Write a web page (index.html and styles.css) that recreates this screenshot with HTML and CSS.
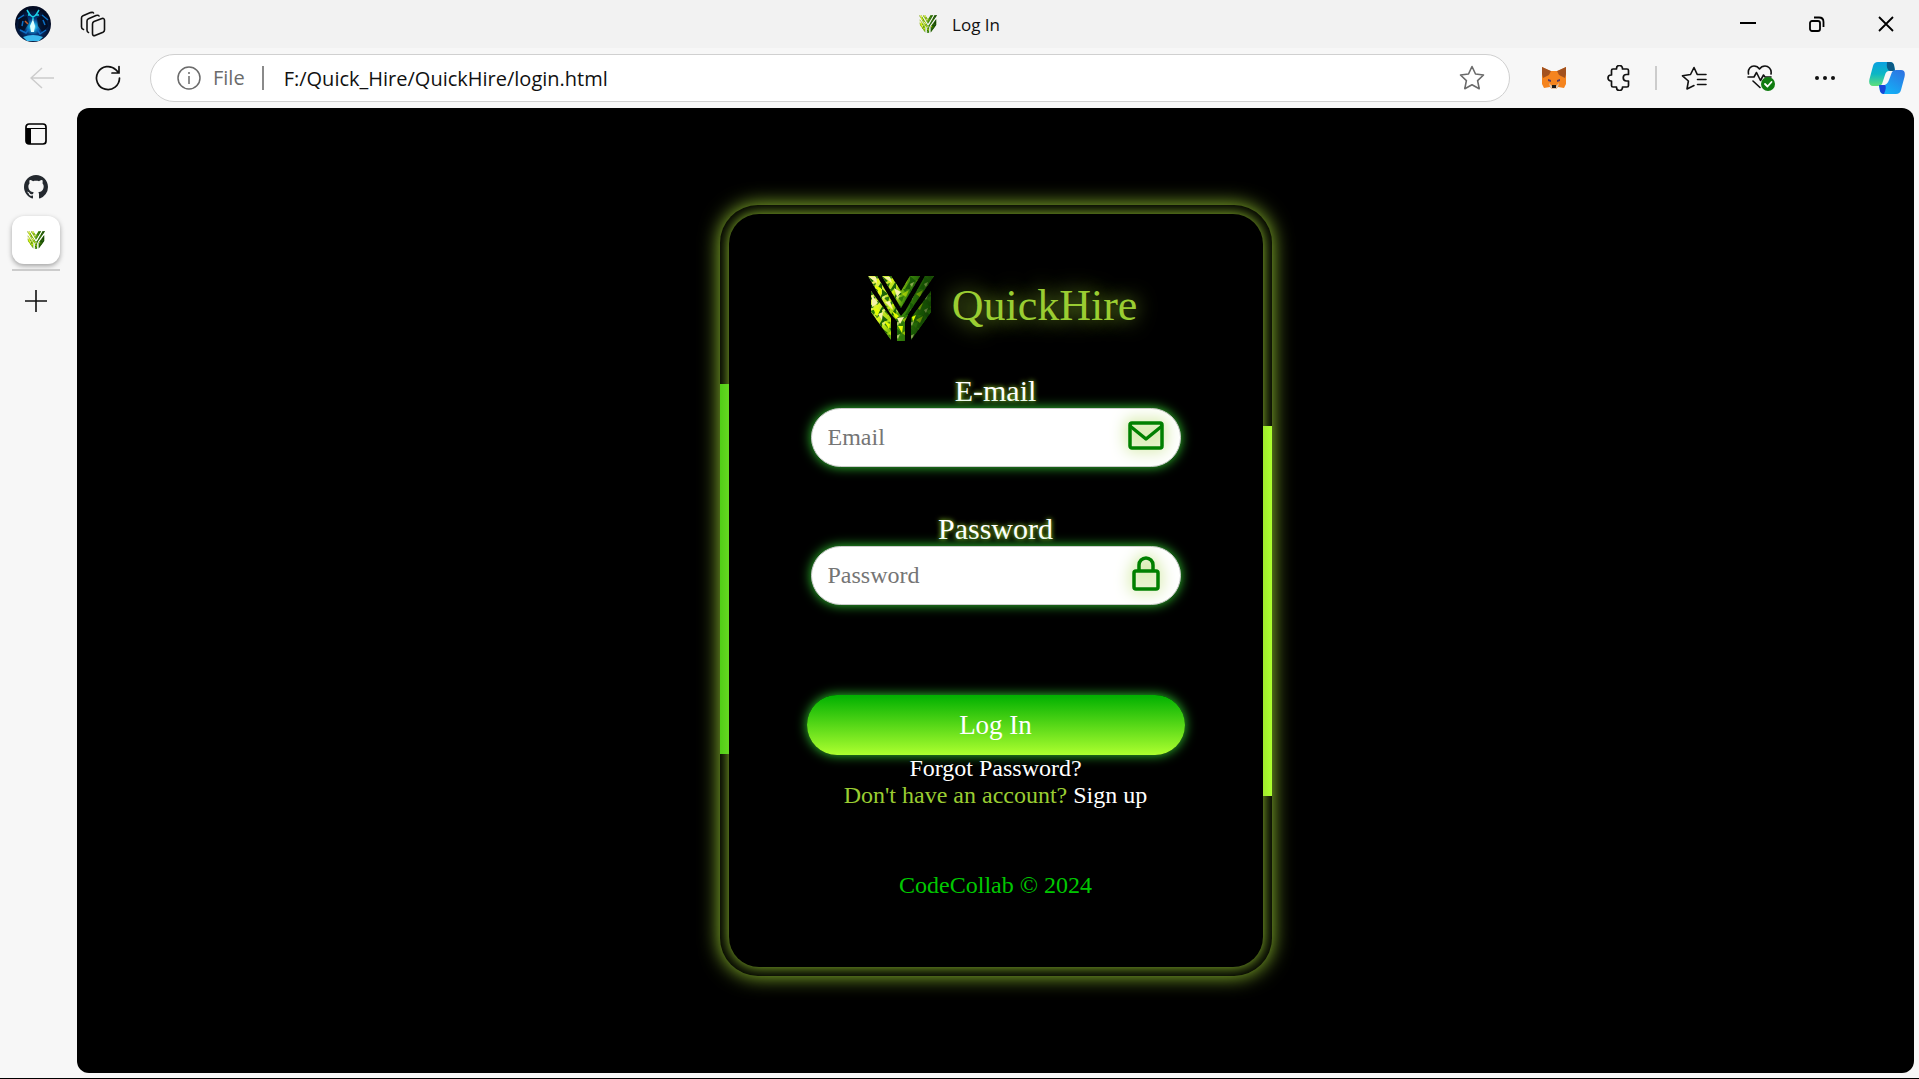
FILE: index.html
```html
<!DOCTYPE html>
<html lang="en">
<head>
<meta charset="utf-8">
<title>Log In</title>
<link rel="stylesheet" href="styles.css">
</head>
<body>
<svg class="defs" aria-hidden="true">
  <defs>
    <linearGradient id="leaf" x1="0" y1="0" x2="66" y2="20" gradientUnits="userSpaceOnUse">
      <stop offset="0" stop-color="#f4f56a"/><stop offset=".45" stop-color="#b5e014"/><stop offset=".62" stop-color="#3f8f0c"/><stop offset="1" stop-color="#174f04"/>
    </linearGradient>
    <pattern id="facets" width="14" height="13" patternUnits="userSpaceOnUse">
      <path d="M0 0L6 5L0 8zM14 5L9 13H14z" fill="#1c6405"/>
      <path d="M6 5L13 1L10 8z" fill="#e9ff00" opacity=".55"/>
      <path d="M2 9L8 7L6 13z" fill="#2d7a08"/>
      <path d="M7 0H12L9 3z" fill="#2d7a08"/>
      <path d="M0 8L4 6L2 11z" fill="#f3f0a0" opacity=".6"/>
    </pattern>
    <linearGradient id="shade" x1="0" x2="1" y1="0" y2="0">
      <stop offset=".5" stop-color="#0a3300" stop-opacity="0"/><stop offset="1" stop-color="#0a3300" stop-opacity=".6"/>
    </linearGradient>
    <path id="strands" d="M0 0H9L29 34L33 40L38 34L57 0H66L40 38V39L37 45V65H29V45L22 37zM14 0H23L33 15L42 0H52L33 32zM3 15L23 42V64L3 36zM63 15L43 42V64L63 36z"/>
    <symbol id="logo" viewBox="0 0 66 65">
      <use href="#strands" fill="url(#leaf)"/>
      <use href="#strands" fill="url(#facets)"/>
      <use href="#strands" fill="url(#shade)"/>
      <path d="M1 1H8L9 7zM16 1H22L24 7zM4 19L10 27L4 31zM17 26L22 25L25 34zM10 38L15 36L14 44zM26 12L33 16L29 21zM29 42L36 41L32 48z" fill="#f6f2a8"/>
      <path d="M6 9L13 12L13 19zM5 32L12 34L9 41zM16 45L22 48L21 53zM24 35L31 40L28 43zM30 50H35L34 57zM44 41L48 39L45 46z" fill="#e6ff00"/>
    </symbol>
  </defs>
</svg>

<div class="browser">
  <header class="titlebar">
    <div class="titlebar-start">
      <button class="icon-btn" aria-label="Profile">
        <svg width="36" height="36" viewBox="0 0 36 36">
          <defs>
            <radialGradient id="glow" cx=".5" cy=".58" r=".5"><stop offset="0" stop-color="#bff"/><stop offset=".18" stop-color="#18a8e0"/><stop offset=".45" stop-color="#063a80"/><stop offset="1" stop-color="#020a22"/></radialGradient>
          </defs>
          <circle cx="18" cy="18" r="18" fill="url(#glow)"/>
          <path d="M4 12L12 10L14 17L9 25L3 22zM22 12L30 8L33 20L28 27L23 20z" fill="#030818" opacity=".75"/>
          <path d="M3 13L9 9M27 9L33 14M5 24L11 27L14 23M31 24L25 28L22 23M8 15L7 20M28 14L30 19" stroke="#0d6fc4" stroke-width="1.500" fill="none"/>
          <path d="M12 4L15 9L18 11L21 9L24 4M18 10V14M13 9H16M20 9H24" stroke="#1ad0e8" stroke-width="1.500" fill="none"/>
          <path d="M18 13L20 20L19 26H16L15 20z" fill="#d9ffff"/>
          <path d="M8 31Q18 27 28 31L24 35H12z" fill="#39b9ee"/>
          <path d="M10 15L13 18" stroke="#c45a2a" stroke-width="1.500"/>
        </svg>
      </button>
      <button class="icon-btn" aria-label="Workspaces">
        <svg width="26" height="26" viewBox="0 0 26 26" fill="none" stroke="#111" stroke-width="1.600" stroke-linejoin="round" stroke-linecap="round">
          <path d="M14 10.500L22 7.500Q24.500 7 24.500 9.500V19Q24.500 20.500 23 21.200L15 24.600Q12.500 25 12.500 22.500V13Q12.500 11.200 14 10.500z"/>
          <path d="M8.500 21.500Q7 21 7 19V10Q7 8.500 8.500 7.800L16 4.500Q18.500 4 19 5"/>
          <path d="M3.500 18.500Q1.500 18 1.500 16V7Q1.500 5.500 3 4.800L10.500 1.600Q13 1 13.500 2"/>
        </svg>
      </button>
    </div>
    <div class="page-title">
      <svg class="favicon" width="18" height="18"><use href="#logo"/></svg>
      <span>Log In</span>
    </div>
    <div class="window-controls">
      <button class="icon-btn" aria-label="Minimize"><svg width="16" height="16"><path d="M0 7H16" stroke="#000" stroke-width="2"/></svg></button>
      <button class="icon-btn" aria-label="Restore"><svg width="16" height="16" fill="none" stroke="#000" stroke-width="1.800"><rect x="1" y="5" width="10" height="10" rx="2"/><path d="M5 1.500H10Q14.500 1.500 14.500 6V11"/></svg></button>
      <button class="icon-btn" aria-label="Close"><svg width="16" height="16"><path d="M1 1L15 15M15 1L1 15" stroke="#000" stroke-width="1.800"/></svg></button>
    </div>
  </header>

  <div class="toolbar">
    <button class="icon-btn back" aria-label="Back"><svg width="24" height="22" fill="none" stroke="#ccc" stroke-width="1.500"><path d="M24 11H1M12 1L1 11L12 21"/></svg></button>
    <button class="icon-btn reload" aria-label="Refresh"><svg width="26" height="26" fill="none" stroke="#111" stroke-width="1.700" stroke-linecap="round"><path d="M24.500 13A11.500 11.500 0 1 1 21 4.800L23.500 7.500M24 1.500V8H17"/></svg></button>
    <div class="address">
      <svg width="24" height="24" fill="none" stroke="#6b6b6b" stroke-width="1.500"><circle cx="12" cy="12" r="11"/><path d="M12 10V18M12 6V8"/></svg>
      <span class="scheme">File</span>
      <input class="url" type="text" aria-label="Address" value="F:/Quick_Hire/QuickHire/login.html">
      <button class="icon-btn" aria-label="Add to favorites"><svg width="26" height="26" viewBox="0 0 26 26" fill="none" stroke="#6b6b6b" stroke-width="1.600" stroke-linejoin="round"><path d="M13 1.500L16.500 9L24.500 10L18.600 15.600L20.200 23.700L13 19.800L5.800 23.700L7.400 15.600L1.500 10L9.500 9z"/></svg></button>
    </div>
    <div class="extensions">
      <button class="icon-btn" aria-label="MetaMask">
        <svg width="26" height="24" viewBox="0 0 26 24"><path d="M1 1L9 5H17L25 1V18L23 22L17 21L15 23H11L9 21L3 22L1 18z" fill="#f5841f"/><path d="M1 1L10 5L8 9L2 12L1 8zM25 1L16 5L18 9L24 12L25 8z" fill="#a3521f"/><path d="M8 17L11 20H15L18 17L17 21L15 23H11L9 21z" fill="#e0c4ae"/><path d="M11 19H15V22H11z" fill="#1c1c1c"/><path d="M7 13L10 14V16L7 15zM19 13L16 14V16L19 15z" fill="#5c3a5e"/></svg>
      </button>
      <button class="icon-btn" aria-label="Extensions">
        <svg width="24" height="26" viewBox="0 0 24 26" fill="none" stroke="#111" stroke-width="1.700" stroke-linejoin="round"><path d="M6 4H9.500V3.500A3 3 0 0 1 15.500 3.500V4H20Q21.500 4 21.500 5.500V9.500H19.500A3 3 0 0 0 19.500 16H21.500V20.500Q21.500 22 20 22H15.500V22.500A3 3 0 0 1 9.500 22.500V22H6Q4.500 22 4.500 20.500V16H4A3 3 0 0 1 4 10H4.500V5.500Q4.500 4 6 4z"/></svg>
      </button>
      <span class="divider"></span>
      <button class="icon-btn" aria-label="Favorites">
        <svg width="26" height="24" viewBox="0 0 26 24" fill="none" stroke="#111" stroke-width="1.600" stroke-linejoin="round" stroke-linecap="round"><path d="M13 19.500L6 23L7.400 15L1.500 9.800L9.500 8.500L13 1.500L16.200 8.300M16.500 8.500H25M16.500 13.500H25M16.500 18.500H25"/></svg>
      </button>
      <button class="icon-btn" aria-label="Browser essentials">
        <svg width="28" height="26" viewBox="0 0 28 26" fill="none" stroke="#111" stroke-width="1.600" stroke-linejoin="round" stroke-linecap="round"><path d="M1.500 9C.5 3.500 4 1 7 1Q10.500 1 12.500 4Q14.500 1 18 1C21 1 25 3.500 24 9M1 12H7L9.500 7.500L13.500 15.500L16.500 10L18 12H24M6 16L13 22.500"/><circle cx="21" cy="19" r="7" fill="#107c10" stroke="none"/><path d="M18 19L20.500 21.500L24.500 17" stroke="#fff" stroke-width="1.800"/></svg>
      </button>
      <button class="icon-btn" aria-label="Settings and more"><svg width="20" height="6"><g fill="#111"><circle cx="2" cy="3" r="2"/><circle cx="10" cy="3" r="2"/><circle cx="18" cy="3" r="2"/></g></svg></button>
      <button class="icon-btn copilot" aria-label="Copilot">
        <svg width="36" height="32" viewBox="0 0 36 32">
          <defs>
            <linearGradient id="cpA" x1="0" y1="0" x2="0" y2="1"><stop offset="0" stop-color="#0aa0e0"/><stop offset=".5" stop-color="#0cb7c4"/><stop offset="1" stop-color="#5fdf7a"/></linearGradient>
            <linearGradient id="cpB" x1="1" y1="0" x2=".3" y2="1"><stop offset="0" stop-color="#2f6fe0"/><stop offset="1" stop-color="#12b4f8"/></linearGradient>
          </defs>
          <path d="M9 0H21Q24 0 25 3L26 9H20Q17 9 16 13L13 22Q12 24 9 24H4Q-1 24 .5 17L4 4Q5 0 9 0z" fill="url(#cpA)"/>
          <path d="M18 0H21Q24 0 25 3L26 9H21Q17 8 18 0z" fill="#0b5a86"/>
          <path d="M27 32H15Q12 32 11 29L10 23H13Q18 24 20 18L23 10Q24 8 27 8H32Q37 8 35.500 15L32 28Q31 32 27 32z" fill="url(#cpB)"/>
          <path d="M10 23H16Q18 25 15 32Q12 32 11 29z" fill="#1746d8"/>
        </svg>
      </button>
    </div>
  </div>

  <div class="body-row">
    <nav class="sidebar" aria-label="Tabs">
      <button class="icon-btn tab" aria-label="Tab actions"><svg width="22" height="22"><rect x="1" y="1" width="20" height="20" rx="3" fill="none" stroke="#000" stroke-width="1.700"/><path d="M1 5H21V6H6V21H3L1 19z"/></svg></button>
      <button class="icon-btn tab" aria-label="GitHub"><svg width="24" height="24" viewBox="0 0 16 16" fill="#24292f"><path d="M8 0C3.580 0 0 3.580 0 8c0 3.540 2.290 6.530 5.470 7.590.4.070.55-.17.55-.38 0-.19-.01-.82-.01-1.490-2.010.37-2.530-.49-2.690-.94-.09-.23-.48-.94-.82-1.130-.28-.15-.68-.52-.01-.53.63-.01 1.080.58 1.230.82.72 1.210 1.870.87 2.330.66.070-.52.28-.87.51-1.070-1.780-.2-3.640-.89-3.640-3.950 0-.87.31-1.590.82-2.150-.08-.2-.36-1.020.08-2.120 0 0 .67-.21 2.200.82.64-.18 1.320-.27 2-.27s1.360.09 2 .27c1.530-1.040 2.200-.82 2.200-.82.44 1.100.16 1.920.08 2.120.51.56.82 1.270.82 2.150 0 3.070-1.870 3.750-3.650 3.950.29.25.54.73.54 1.480 0 1.070-.01 1.930-.01 2.200 0 .21.15.46.55.38A8.010 8.010 0 0 0 16 8c0-4.420-3.580-8-8-8z"/></svg></button>
      <button class="icon-btn tab tab-active" aria-label="Log In"><svg width="18" height="18"><use href="#logo"/></svg></button>
      <button class="icon-btn tab tab-new" aria-label="New tab"><svg width="22" height="22"><path d="M11 0V22M0 11H22" stroke="#111" stroke-width="1.600"/></svg></button>
    </nav>

    <main class="viewport">
      <section class="frame">
        <div class="card">
          <h1 class="brand">
            <svg width="94" height="94" viewBox="-14 -18 94 94"><use href="#logo" width="66" height="65"/></svg>
            <span>QuickHire</span>
          </h1>
          <form class="form">
            <label for="email">E-mail</label>
            <div class="field">
              <input id="email" type="email" placeholder="Email">
              <svg class="field-icon" width="36" height="36" viewBox="0 0 36 36" fill="none" stroke="#008000" stroke-width="3.500" stroke-linejoin="round"><rect x="2" y="6" width="32" height="25" rx="2"/><path d="M2 9L18 22L34 9"/></svg>
            </div>
            <label for="password">Password</label>
            <div class="field">
              <input id="password" type="password" placeholder="Password">
              <svg class="field-icon" width="36" height="36" viewBox="0 0 36 36" fill="none" stroke="#008000" stroke-width="3.500" stroke-linejoin="round"><rect x="6" y="16" width="24" height="18" rx="2"/><path d="M11 16V10A7 7 0 0 1 25 10V16"/></svg>
            </div>
            <button class="submit" type="button">Log In</button>
          </form>
          <p class="line"><a href="#">Forgot Password?</a></p>
          <p class="line">Don't have an account? <a href="#">Sign up</a></p>
          <footer class="copyright">CodeCollab © 2024</footer>
        </div>
      </section>
    </main>
  </div>
</div>
</body>
</html>
```
FILE: styles.css
```css
* { box-sizing: border-box; }

body {
  margin: 0;
  background: #f7f7f7;
  font-family: "Open Sans", "Noto Sans", sans-serif;
  color: #111;
}

.defs { position: absolute; width: 0; height: 0; }

svg { display: block; flex: none; }

.browser {
  display: flex;
  flex-direction: column;
  min-height: 100vh;
  border-bottom: 1px solid #000;
}

.icon-btn {
  display: flex;
  align-items: center;
  justify-content: center;
  padding: 0;
  border: 0;
  background: none;
}

/* Title bar */
.titlebar {
  display: grid;
  grid-template-columns: 1fr auto 1fr;
  align-items: center;
  height: 48px;
  padding: 0 15px;
  background: #f2f2f2;
}

.titlebar-start { display: flex; align-items: center; gap: 29px; }

.page-title {
  display: flex;
  align-items: center;
  gap: 15px;
  font-size: 17px;
}

.window-controls {
  display: flex;
  justify-content: flex-end;
  gap: 53px;
  padding-right: 10px;
}

/* Toolbar */
.toolbar {
  display: flex;
  align-items: center;
  height: 60px;
  padding: 0 14px 0 30px;
}

.reload { margin: 0 29px 0 41px; }

.address {
  display: flex;
  flex: 1;
  align-items: center;
  height: 48px;
  padding: 0 24px 0 26px;
  border: 1px solid #d0d0d0;
  border-radius: 24px;
  background: #fff;
  font-size: 20px;
}

.scheme {
  margin: 0 20px 0 12px;
  padding-right: 17px;
  border-right: 2px solid #8a8a8a;
  color: #6b6b6b;
  line-height: 24px;
}

.url {
  flex: 1;
  min-width: 0;
  padding: 0;
  border: 0;
  background: none;
  color: #111;
  font: inherit;
}

.extensions {
  display: flex;
  align-items: center;
  gap: 40px;
  padding-left: 31px;
}

.divider { width: 2px; height: 24px; margin: 0 -16px; background: #ccc; }

.copilot { margin-left: -6px; }

/* Tabs down the left and the page beside them */
.body-row {
  display: flex;
  flex: 1;
  padding: 0 5px 5px 0;
}

.sidebar {
  display: flex;
  flex: none;
  flex-direction: column;
  gap: 5px;
  width: 77px;
  padding: 2px 17px 0 12px;
}

.tab { height: 48px; border-radius: 12px; }

.tab-active { background: #fff; box-shadow: 0 2px 5px rgba(0, 0, 0, .35); }

.tab-new { height: 62px; border-top: 2px solid #ccc; border-radius: 0; }

.viewport {
  display: flex;
  flex: 1;
  align-items: center;
  justify-content: center;
  border-radius: 12px;
  background: #000;
  font-family: "Liberation Serif", serif;
}

/* Glowing frame: the card's own glow shows only inside the ring */
.frame {
  position: relative;
  width: 100%;
  max-width: 552px;
  padding: 9px;
  overflow: hidden;
  border-radius: 38px;
  background: #000;
  box-shadow: 0 0 20px #9acd32;
}

.frame::before,
.frame::after {
  content: "";
  position: absolute;
  width: 9px;
  height: 48%;
}

.frame::before {
  top: 179px;
  left: 0;
  background: linear-gradient(90deg, #50ce16, #66d822);
}

.frame::after {
  top: 221px;
  right: 0;
  background: linear-gradient(90deg, #a0ea2c, #adff2f);
}

.card {
  padding: 44px 80px 68px;
  border-radius: 30px;
  background: #000;
  box-shadow: 0 0 14px #9acd32;
  text-align: center;
}

.brand {
  display: flex;
  align-items: center;
  justify-content: center;
  gap: 4px;
  margin: 0 0 22px;
  color: #9acd32;
  font-size: 44px;
  font-weight: 400;
  text-shadow: 0 0 20px #9acd32;
}

.form {
  display: flex;
  flex-direction: column;
  color: #fff;
  font-size: 30px;
  line-height: 34px;
}

.form label { text-shadow: 0 0 5px #adff2f; }

.field { position: relative; margin: 0 2px 45px; }

.field input {
  display: block;
  width: 100%;
  height: 59px;
  padding: 0 60px 0 16px;
  border: 1px solid #ccc;
  border-radius: 30px;
  background: #fff;
  box-shadow: 0 0 12px #32cd32;
  color: #111;
  font-family: inherit;
  font-size: 24px;
}

.field input::placeholder { color: #757575; }

.field-icon {
  position: absolute;
  top: 9px;
  right: 17px;
  filter: drop-shadow(0 0 8px #9acd32);
}

.submit {
  height: 60px;
  margin: 45px -2px 0;
  border: 0;
  border-radius: 30px;
  background: linear-gradient(#00b000, #adff2f);
  box-shadow: 0 0 12px #32cd32;
  color: #fff;
  font-family: inherit;
  font-size: 27px;
}

.line {
  margin: 0;
  color: #9acd32;
  font-size: 24px;
  line-height: 27px;
}

.line a { color: #fff; text-decoration: none; }

.copyright {
  margin-top: 63px;
  color: #00c800;
  font-size: 24px;
  line-height: 27px;
}
```
